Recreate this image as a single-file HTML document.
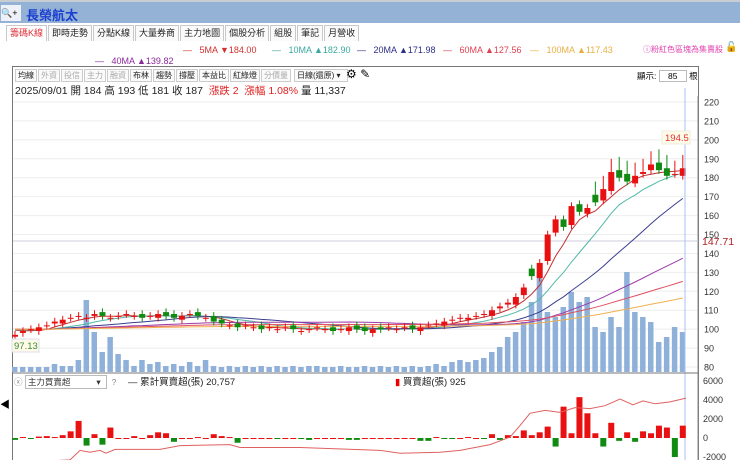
<!DOCTYPE html>
<html><head><meta charset="utf-8"><style>
body{margin:0;width:740px;height:460px;overflow:hidden;background:#fff;font-family:"Liberation Sans","Noto Sans CJK TC",sans-serif;position:relative}
.top{position:absolute;left:0;top:0;width:740px;height:23px;background:#93b2d6;border-top:2px solid #c8cdd4;box-sizing:border-box}
.top .t{position:absolute;left:26px;top:3px;font-size:13px;font-weight:bold;color:#1b3fd0}
.top .q{position:absolute;left:1px;top:3px;width:20px;height:16px;background:#eef2f8;font-size:9px;line-height:16px}
.tabs{position:absolute;left:6px;top:25px;height:16px;display:flex}
.tabs div{font-size:9px;border:1px solid #c8c8c8;border-bottom:none;padding:0 3px;line-height:15px;color:#222;margin-right:1px;background:#fafafa}
.tabs div.a{color:#e0303a;background:#fff}
.a1{position:absolute;font-size:9px;white-space:nowrap}
.box{position:absolute;left:12px;top:66px;width:687px;height:394px;border:1px solid #777;border-bottom:none;box-sizing:border-box}
.tb{position:absolute;left:15px;top:69px;display:flex}
.tb div{font-size:8px;border:1px solid #ccc;padding:0 2px;line-height:11px;margin-right:1px;color:#222;background:#fafafa}
.tb div.g{color:#aaa}
.info{position:absolute;left:15px;top:83px;font-size:10.5px;color:#222;white-space:nowrap}
svg{position:absolute;left:0;top:0}
</style></head><body>
<div class="top"><div class="q">🔍+</div><div class="t">長榮航太</div></div>
<div class="tabs"><div class="a">籌碼K線</div><div>即時走勢</div><div>分點K線</div><div>大量券商</div><div>主力地圖</div><div>個股分析</div><div>組股</div><div>筆記</div><div>月營收</div></div>
<div class="a1" style="left:183px;top:45px;color:#d0302e">—&nbsp;&nbsp; 5MA ▼184.00</div>
<div class="a1" style="left:272px;top:45px;color:#3aa9a0">—&nbsp;&nbsp; 10MA ▲182.90</div>
<div class="a1" style="left:357px;top:45px;color:#2c2f86">—&nbsp;&nbsp; 20MA ▲171.98</div>
<div class="a1" style="left:443px;top:45px;color:#e04050">—&nbsp;&nbsp; 60MA ▲127.56</div>
<div class="a1" style="left:530px;top:45px;color:#e8b040">—&nbsp;&nbsp; 100MA ▲117.43</div>
<div class="a1" style="left:95px;top:56px;color:#8a2a9a">—&nbsp;&nbsp; 40MA ▲139.82</div>
<div class="a1" style="left:643px;top:44px;color:#e040b0;font-size:8px">ⓘ粉紅色區塊為集賣股</div>
<div class="a1" style="left:725px;top:42px;font-size:10px">🔓</div>
<div class="box"></div>
<div class="tb"><div>均線</div><div class="g">外資</div><div class="g">投信</div><div class="g">主力</div><div class="g">融資</div><div>布林</div><div>趨勢</div><div>撐壓</div><div>本益比</div><div>紅綠燈</div><div class="g">分價量</div><div style="width:48px;margin-left:2px">日線(還原) ▾</div></div>
<div class="a1" style="left:346px;top:67px;font-size:12px">⚙ ✎</div>
<div class="a1" style="left:637px;top:70px;font-size:8.5px">顯示: <span style="display:inline-block;border:1px solid #bbb;width:26px;text-align:center">85</span> 根</div>
<div class="info">2025/09/01 開 184 高 193 低 181 收 187 &nbsp;<span style="color:#e02020">漲跌 2 &nbsp;漲幅 1.08%</span> 量 11,337</div>
<div class="a1" style="left:0;top:396px;font-size:10px">◀</div>
<div class="a1" style="left:14px;top:375px;font-size:8.5px;color:#888">ⓧ <span style="display:inline-block;border:1px solid #bbb;width:78px;color:#333;padding-left:2px">主力買賣超&nbsp;&nbsp;&nbsp;&nbsp;&nbsp;&nbsp;&nbsp;&nbsp;&nbsp;&nbsp; ▾</span> &nbsp;?</div>
<div class="a1" style="left:128px;top:374px;font-size:9.5px;color:#222">— 累計買賣超(張) 20,757</div>
<div class="a1" style="left:395px;top:374px;font-size:9.5px;color:#222"><span style="color:#e00">▮</span> 買賣超(張) 925</div>
<svg width="740" height="460" id="s"></svg>
<script>
var S=document.getElementById('s'),h='';
function Y(p){return 102+(220-p)*1.893}
var c=[97,99,100,101,102,104,105,106,107,106,108,107,106,107,108,107,106,107,108,107,106,107,108,107,106,104,103,102,101,102,101,100,101,100,101,100,99,100,101,100,99,100,101,100,99,100,100,101,100,101,100,101,102,103,104,105,106,106,107,108,110,112,114,117,122,128,135,150,158,154,165,162,164,167,174,183,180,178,181,183,187,184,181,182,185];
var vol=[5,5,5,5,5,8,6,6,12,72,40,20,35,18,12,6,12,8,10,6,8,6,10,6,12,6,5,6,5,6,5,6,5,6,5,6,5,6,6,5,5,6,5,5,6,5,6,5,6,5,6,5,6,8,6,10,12,10,12,14,20,25,35,40,50,70,100,60,55,65,80,70,75,45,40,55,45,100,60,55,50,30,35,45,40];
var cs=[-200,100,-100,150,200,100,300,700,1800,-800,400,-700,1100,0,0,200,0,300,600,500,-400,0,0,100,0,400,200,100,-500,0,0,0,0,-100,0,0,-100,-200,0,0,0,0,-200,-200,0,0,0,0,0,0,0,-300,-300,100,-100,-100,0,100,0,-100,400,-200,300,200,800,300,600,1200,-900,3300,500,4300,2600,500,-900,1600,-300,600,-400,700,500,1300,1100,-2000,1300];
for(var y=102,p=220;p>=80;p-=10,y+=18.93){h+='<line x1="13" x2="698" y1="'+y+'" y2="'+y+'" stroke="#eee"/><text x="704" y="'+(y+3.5)+'" font-size="9" fill="#333">'+p+'</text>';}
h+='<line x1="698" x2="698" y1="96" y2="460" stroke="#888"/>';
h+='<line x1="13" x2="698" y1="241" y2="241" stroke="#ccd"/>';
function ma(n){var pts=[];var ext=[];for(var k=0;k<100;k++)ext.push(100);ext=ext.concat(c);for(var i=0;i<c.length;i++){var s=0;for(var j=0;j<n;j++)s+=ext[100+i-j];pts.push((15+i*7.95)+','+Y(s/n).toFixed(1));}return pts.join(' ');}
var mc=[[5,'#c03030'],[10,'#50b8a8'],[20,'#3a3d90'],[40,'#9a3aa8'],[60,'#e05060'],[100,'#f0b050']];
for(var i=0;i<85;i++){var x=15+i*7.95;h+='<rect x="'+(x-3)+'" y="'+(372-vol[i])+'" width="5.5" height="'+vol[i]+'" fill="#8fb0d8"/>';}
mc.forEach(function(m){h+='<polyline points="'+ma(m[0])+'" fill="none" stroke="'+m[1]+'" stroke-width="1"/>'});
for(var i=0;i<85;i++){var x=15+i*7.95,o=i?c[i-1]+(i%3?1:-1):96,cl=c[i];if(i>62&&i%4==1){o=cl+4}var up=cl>=o,col=up?'#e81010':'#118a11';var hi=Math.max(o,cl)+2+(i>72?5:0),lo=Math.min(o,cl)-2;
h+='<line x1="'+x+'" x2="'+x+'" y1="'+Y(hi)+'" y2="'+Y(lo)+'" stroke="'+col+'"/><rect x="'+(x-3)+'" y="'+Y(Math.max(o,cl))+'" width="6" height="'+Math.max(1,Math.abs(o-cl)*1.893)+'" fill="'+col+'"/>';}
h+='<line x1="685" x2="685" y1="88" y2="460" stroke="#aac0f0"/>';
h+='<rect x="662" y="131" width="28" height="13" fill="#fffbe8" stroke="#eed"/><text x="665" y="141" font-size="9.5" fill="#e03030">194.5</text>';
h+='<text x="702" y="245" font-size="10.5" fill="#b02020">147.71</text>';
h+='<rect x="12" y="339" width="27" height="13" fill="#fffbe8" stroke="#dde"/><text x="14" y="349" font-size="9.5" fill="#3a8a3a">97.13</text>';
h+='<line x1="12" x2="698" y1="373" y2="373" stroke="#777"/>';
var ly=[[6000,381],[4000,400],[2000,419],[0,438],[-2000,457]];ly.forEach(function(a){h+='<text x="703" y="'+(a[1]+3)+'" font-size="9" fill="#333">'+a[0]+'</text>'});
for(var i=0;i<85;i++){var x=15+i*7.95,v=cs[i]*0.0095,col=v>=0?'#e81010':'#118a11';h+='<rect x="'+(x-3)+'" y="'+(v>=0?438-v:438)+'" width="6" height="'+Math.max(1,Math.abs(v))+'" fill="'+col+'"/>';}
var cp=[[13,-2600],[70,-2300],[80,-1300],[90,-1500],[100,-1300],[106,-1600],[115,-1200],[160,-1200],[180,-800],[230,-700],[240,-1000],[300,-1000],[380,-1300],[400,-1600],[440,-1500],[460,-1300],[490,-700],[510,100],[520,1300],[530,2600],[545,2900],[560,2700],[575,3200],[590,3100],[605,3400],[620,4100],[633,3500],[643,3900],[655,3600],[670,3800],[686,4200]];
h+='<polyline points="'+cp.map(function(a){return a[0]+','+(438-a[1]*0.0095).toFixed(1)}).join(' ')+'" fill="none" stroke="#e06060"/>';
S.innerHTML=h;
</script>
</body></html>
